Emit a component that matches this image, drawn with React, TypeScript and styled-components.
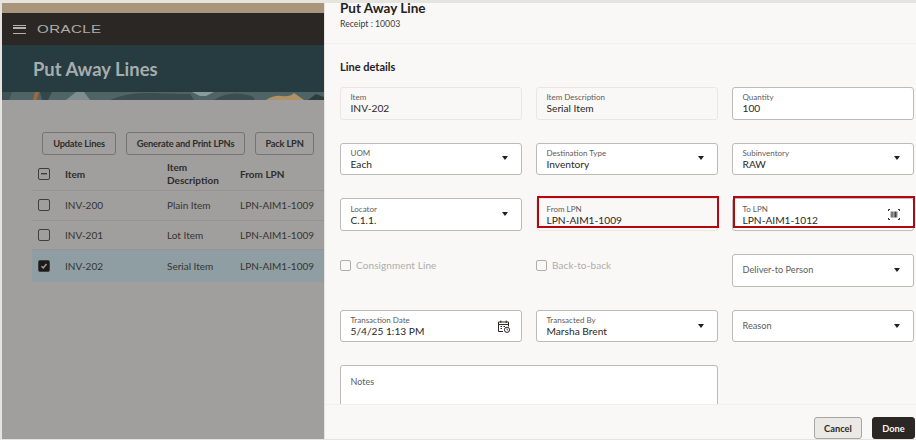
import { ReactNode } from 'react';
import styled, { createGlobalStyle } from 'styled-components';

const Global = createGlobalStyle`
  html, body { margin: 0; padding: 0; }
  body { font-family: Lato, "Noto Sans", sans-serif; background: #e6e4df; }
`;

const Page = styled.div`
  width: 916px;
  height: 440px;
  display: flex;
  overflow: hidden;
  padding: 3px 0 1px 2px;
  box-sizing: border-box;
  background: #e6e4df;
`;

/* dimmed page behind the drawer */
const Behind = styled.div`
  width: 322px;
  flex: none;
  display: flex;
  flex-direction: column;
  background: #a09f9d;
  overflow: hidden;
`;

const Notice = styled.div`
  height: 10px;
  flex: none;
  background: #a8957c;
`;

const Brand = styled.div`
  height: 32px;
  flex: none;
  background: #2b2724;
  display: flex;
  align-items: center;
  padding-left: 11px;
  gap: 11px;
`;

const Burger = styled.div`
  width: 13px;
  height: 9px;
  border-top: 1.5px solid #b3b1ae;
  border-bottom: 1.5px solid #b3b1ae;
  position: relative;
  box-sizing: border-box;
  &::after {
    content: '';
    position: absolute;
    left: 0;
    right: 0;
    top: 1.5px;
    height: 1.5px;
    background: #b3b1ae;
  }
`;

const Logo = styled.span`
  font-family: "Liberation Sans", sans-serif;
  font-size: 11px;
  color: #aeaca9;
  display: inline-block;
  transform: scaleX(1.37);
  transform-origin: left center;
  letter-spacing: 0.3px;
`;

const Heading = styled.div`
  height: 47px;
  flex: none;
  background: #263c40;
  color: #a7adae;
  font-size: 18.4px;
  font-weight: 700;
  display: flex;
  align-items: center;
  padding-left: 31px;
  box-sizing: border-box;
`;

const Strip = styled.svg`
  display: block;
  width: 322px;
  height: 8px;
  flex: none;
`;

const Actions = styled.div`
  display: flex;
  gap: 10px;
  padding: 32px 0 0 40px;
`;

const ActionButton = styled.div<{ $width: number }>`
  height: 23px;
  width: ${(p) => p.$width}px;
  box-sizing: border-box;
  border: 1px solid #757471;
  border-radius: 3px;
  display: flex;
  align-items: center;
  justify-content: center;
  font-size: 9.3px;
  font-weight: 700;
  letter-spacing: -0.2px;
  color: #2e2d2b;
  white-space: nowrap;
`;

const Table = styled.div`
  margin: 2px 0 0 30px;
`;

const Row = styled.div<{ $head?: boolean; $selected?: boolean }>`
  display: grid;
  grid-template-columns: 27px 102px 73px 1fr;
  align-items: center;
  height: ${(p) => (p.$head ? '34px' : p.$selected ? '32px' : '29.5px')};
  padding-left: 6px;
  font-size: 10px;
  font-weight: ${(p) => (p.$head ? 700 : 400)};
  color: ${(p) => (p.$head ? '#2e2d2b' : '#353432')};
  background: ${(p) => (p.$selected ? '#8f9ea3' : 'transparent')};
  border-bottom: 1px solid ${(p) => (p.$selected ? 'transparent' : '#959492')};
  box-sizing: border-box;
  white-space: nowrap;
`;

const Wrapped = styled.span`
  white-space: normal;
  line-height: 13px;
  width: 53px;
`;

const TableBox = styled.span<{ $tone?: string }>`
  width: 10px;
  height: 10px;
  border: 1px solid #3f3e3c;
  border-radius: 2px;
  display: flex;
  align-items: center;
  justify-content: center;
  background: ${(p) => p.$tone || 'transparent'};
`;

/* the drawer itself */
const Drawer = styled.div`
  flex: 1;
  display: flex;
  flex-direction: column;
  background: #f9f8f6;
  margin-left: 1px;
  overflow: hidden;
`;

const DrawerHead = styled.div`
  height: 41px;
  box-sizing: border-box;
  padding-left: 15px;
  border-bottom: 1px solid #f1efec;
  flex: none;
`;

const Title = styled.div`
  font-size: 13.5px;
  font-weight: 700;
  line-height: 14px;
  margin-top: -2px;
  color: #24221f;
`;

const Sub = styled.div`
  font-size: 8.7px;
  line-height: 12px;
  margin-top: 3px;
  color: #3d3b38;
`;

const Body = styled.div`
  flex: 1;
  overflow: hidden;
  padding: 16px 0 0 15px;
`;

const Section = styled.div`
  font-size: 11px;
  font-weight: 700;
  line-height: 14px;
  color: #24221f;
  margin-bottom: 13px;
`;

const Grid = styled.div`
  display: grid;
  grid-template-columns: repeat(3, 181.5px);
  grid-auto-rows: 32.5px;
  column-gap: 14.5px;
  row-gap: 23.2px;
`;

const Field = styled.div<{ $readonly?: boolean; $flagged?: boolean }>`
  position: relative;
  box-sizing: border-box;
  border: 1px solid ${(p) => (p.$readonly ? '#e9e7e3' : '#bdbbb7')};
  border-radius: 3px;
  background: ${(p) => (p.$readonly ? 'transparent' : '#fff')};
  padding: 0 9.5px;
  display: flex;
  align-items: center;
  justify-content: space-between;
  ${(p) =>
    p.$flagged
      ? `&::after {
          content: '';
          position: absolute;
          top: -3px;
          bottom: 2px;
          left: 0;
          right: -2px;
          border: 2px solid #b5070f;
        }`
      : ''}
`;

const FieldText = styled.div`
  min-width: 0;
`;

const Label = styled.div`
  font-size: 8px;
  line-height: 10px;
  color: #5f5d5a;
`;

const Value = styled.div`
  font-size: 10.2px;
  line-height: 12px;
  color: #2b2926;
`;

const Placeholder = styled.div`
  font-size: 9.2px;
  color: #5f5d5a;
  margin-top: -1px;
`;

const Caret = styled.span`
  width: 0;
  height: 0;
  border-left: 3.5px solid transparent;
  border-right: 3.5px solid transparent;
  border-top: 4px solid #1f1d1b;
  margin-right: 3.5px;
  margin-top: -1px;
`;

const CheckRow = styled.div`
  display: flex;
  align-items: center;
  gap: 5px;
  padding-bottom: 10px;
  font-size: 10px;
  color: #aeaca9;
  letter-spacing: 0.1px;
`;

const CheckBox = styled.span`
  width: 9px;
  height: 9px;
  border: 1px solid #b0aeab;
  border-radius: 2px;
`;

const Notes = styled.div`
  grid-column: 1 / span 2;
  height: 80px;
  box-sizing: border-box;
  border: 1px solid #bdbbb7;
  border-radius: 3px;
  background: #fff;
  padding: 10px 9.5px;
  font-size: 9px;
  color: #5f5d5a;
`;

const Footer = styled.div`
  height: 35px;
  flex: none;
  box-sizing: border-box;
  display: flex;
  justify-content: flex-end;
  gap: 10px;
  padding: 12px 1px 0 0;
  background: #f9f8f6;
  border-top: 1px solid #f1efec;
`;

const FootButton = styled.div<{ $primary?: boolean }>`
  height: 22px;
  width: ${(p) => (p.$primary ? '43px' : '48px')};
  box-sizing: border-box;
  border-radius: 3px;
  border: 1px solid ${(p) => (p.$primary ? '#2b2724' : '#a8a6a2')};
  background: ${(p) => (p.$primary ? '#2b2724' : '#ebe9e5')};
  color: ${(p) => (p.$primary ? '#f5f4f2' : '#2b2926')};
  font-size: 9.3px;
  font-weight: 700;
  display: flex;
  align-items: center;
  justify-content: center;
`;

const IconSlot = styled.span<{ $inset: number }>`
  display: flex;
  margin-right: ${(p) => p.$inset}px;
`;

const BarcodeIcon = () => (
  <svg width="12" height="11" viewBox="0 0 12 11" fill="none" stroke="#2b2926" strokeWidth="1">
    <path d="M0.5 2V0.5H2M10 0.5H11.5V2M11.5 9V10.5H10M2 10.5H0.5V9" />
    <path d="M3.2 2.5V8.5M4.8 2.5V8.5M6.2 2.5V8.5M7.5 2.5V8.5M8.8 2.5V8.5" strokeWidth="0.9" />
  </svg>
);

const CalendarIcon = () => (
  <svg width="14" height="13" viewBox="0 0 14 13" fill="none" stroke="#2b2926" strokeWidth="1">
    <path d="M6 11.5H1.5V2H11.5V6.5" />
    <path d="M1.5 4.5H11.5M3.8 0.5V3M9.2 0.5V3" />
    <path d="M3.5 6.5H5M3.5 8.5H5M6.5 6.5H8" />
    <circle cx="10" cy="9.8" r="2.6" />
    <path d="M10 8.5V9.9H11.2" strokeWidth="0.8" />
  </svg>
);

const Tick = () => (
  <svg width="8" height="8" viewBox="0 0 8 8" fill="none" stroke="#a0a4a5" strokeWidth="1.4">
    <path d="M1.5 4.2L3.3 6L6.5 2" />
  </svg>
);

const lines = [
  { item: 'INV-200', desc: 'Plain Item', lpn: 'LPN-AIM1-1009' },
  { item: 'INV-201', desc: 'Lot Item', lpn: 'LPN-AIM1-1009' },
  { item: 'INV-202', desc: 'Serial Item', lpn: 'LPN-AIM1-1009', selected: true },
];

function TextField({ label, value, readonly, flagged, icon, inset = 0 }: {
  label: string; value: string; readonly?: boolean; flagged?: boolean; icon?: ReactNode; inset?: number;
}) {
  return (
    <Field $readonly={readonly} $flagged={flagged}>
      <FieldText>
        <Label>{label}</Label>
        <Value>{value}</Value>
      </FieldText>
      {icon && <IconSlot $inset={inset}>{icon}</IconSlot>}
    </Field>
  );
}

function SelectField({ label, value }: { label: string; value?: string }) {
  return (
    <Field>
      {value ? (
        <FieldText>
          <Label>{label}</Label>
          <Value>{value}</Value>
        </FieldText>
      ) : (
        <Placeholder>{label}</Placeholder>
      )}
      <Caret />
    </Field>
  );
}

export default function App() {
  return (
    <Page>
      <Global />
      <Behind>
        <Notice />
        <Brand>
          <Burger />
          <Logo>ORACLE</Logo>
        </Brand>
        <Heading>Put Away Lines</Heading>
        <Strip viewBox="0 0 322 8" preserveAspectRatio="none">
          <rect width="322" height="8" fill="#4f6467" />
          <path d="M0 0H10L7 8H0Z" fill="#3f5356" />
          <path d="M33 0H37L34.5 8H31Z" fill="#a5673a" />
          <path d="M38 0H50L46 8H40Z" fill="#34474a" />
          <path d="M64 8L74 0H82L88 8Z" fill="#808d90" />
          <path d="M108 8Q125 0 150 1T188 2L192 8Z" fill="#3a4e51" />
          <path d="M190 0H212L204 4H198Z" fill="#8a9b9e" />
          <path d="M212 8Q225 0 240 2T252 8Z" fill="#3a4e51" />
          <path d="M264 8Q272 3 280 4T292 1L302 8Z" fill="#b09167" />
          <path d="M306 8L314 2L322 5V8Z" fill="#2c3d40" />
        </Strip>
        <Actions>
          <ActionButton $width={74}>Update Lines</ActionButton>
          <ActionButton $width={119}>Generate and Print LPNs</ActionButton>
          <ActionButton $width={59}>Pack LPN</ActionButton>
        </Actions>
        <Table>
          <Row $head>
            <TableBox>
              <svg width="6" height="2" viewBox="0 0 6 2"><rect width="6" height="1.4" fill="#3f3e3c" /></svg>
            </TableBox>
            <span>Item</span>
            <Wrapped>Item Description</Wrapped>
            <span>From LPN</span>
          </Row>
          {lines.map((l) => (
            <Row key={l.item} $selected={l.selected}>
              <TableBox $tone={l.selected ? '#1d1b1a' : undefined}>{l.selected && <Tick />}</TableBox>
              <span>{l.item}</span>
              <span>{l.desc}</span>
              <span>{l.lpn}</span>
            </Row>
          ))}
        </Table>
      </Behind>

      <Drawer>
        <DrawerHead>
          <Title>Put Away Line</Title>
          <Sub>Receipt : 10003</Sub>
        </DrawerHead>
        <Body>
          <Section>Line details</Section>
          <Grid>
            <TextField label="Item" value="INV-202" readonly />
            <TextField label="Item Description" value="Serial Item" readonly />
            <TextField label="Quantity" value="100" />

            <SelectField label="UOM" value="Each" />
            <SelectField label="Destination Type" value="Inventory" />
            <SelectField label="Subinventory" value="RAW" />

            <SelectField label="Locator" value="C.1.1." />
            <TextField label="From LPN" value="LPN-AIM1-1009" readonly flagged />
            <TextField label="To LPN" value="LPN-AIM1-1012" flagged icon={<BarcodeIcon />} inset={3} />

            <CheckRow><CheckBox />Consignment Line</CheckRow>
            <CheckRow><CheckBox />Back-to-back</CheckRow>
            <SelectField label="Deliver-to Person" />

            <TextField label="Transaction Date" value="5/4/25 1:13 PM" icon={<CalendarIcon />} />
            <SelectField label="Transacted By" value="Marsha Brent" />
            <SelectField label="Reason" />

            <Notes>Notes</Notes>
          </Grid>
        </Body>
        <Footer>
          <FootButton>Cancel</FootButton>
          <FootButton $primary>Done</FootButton>
        </Footer>
      </Drawer>
    </Page>
  );
}
